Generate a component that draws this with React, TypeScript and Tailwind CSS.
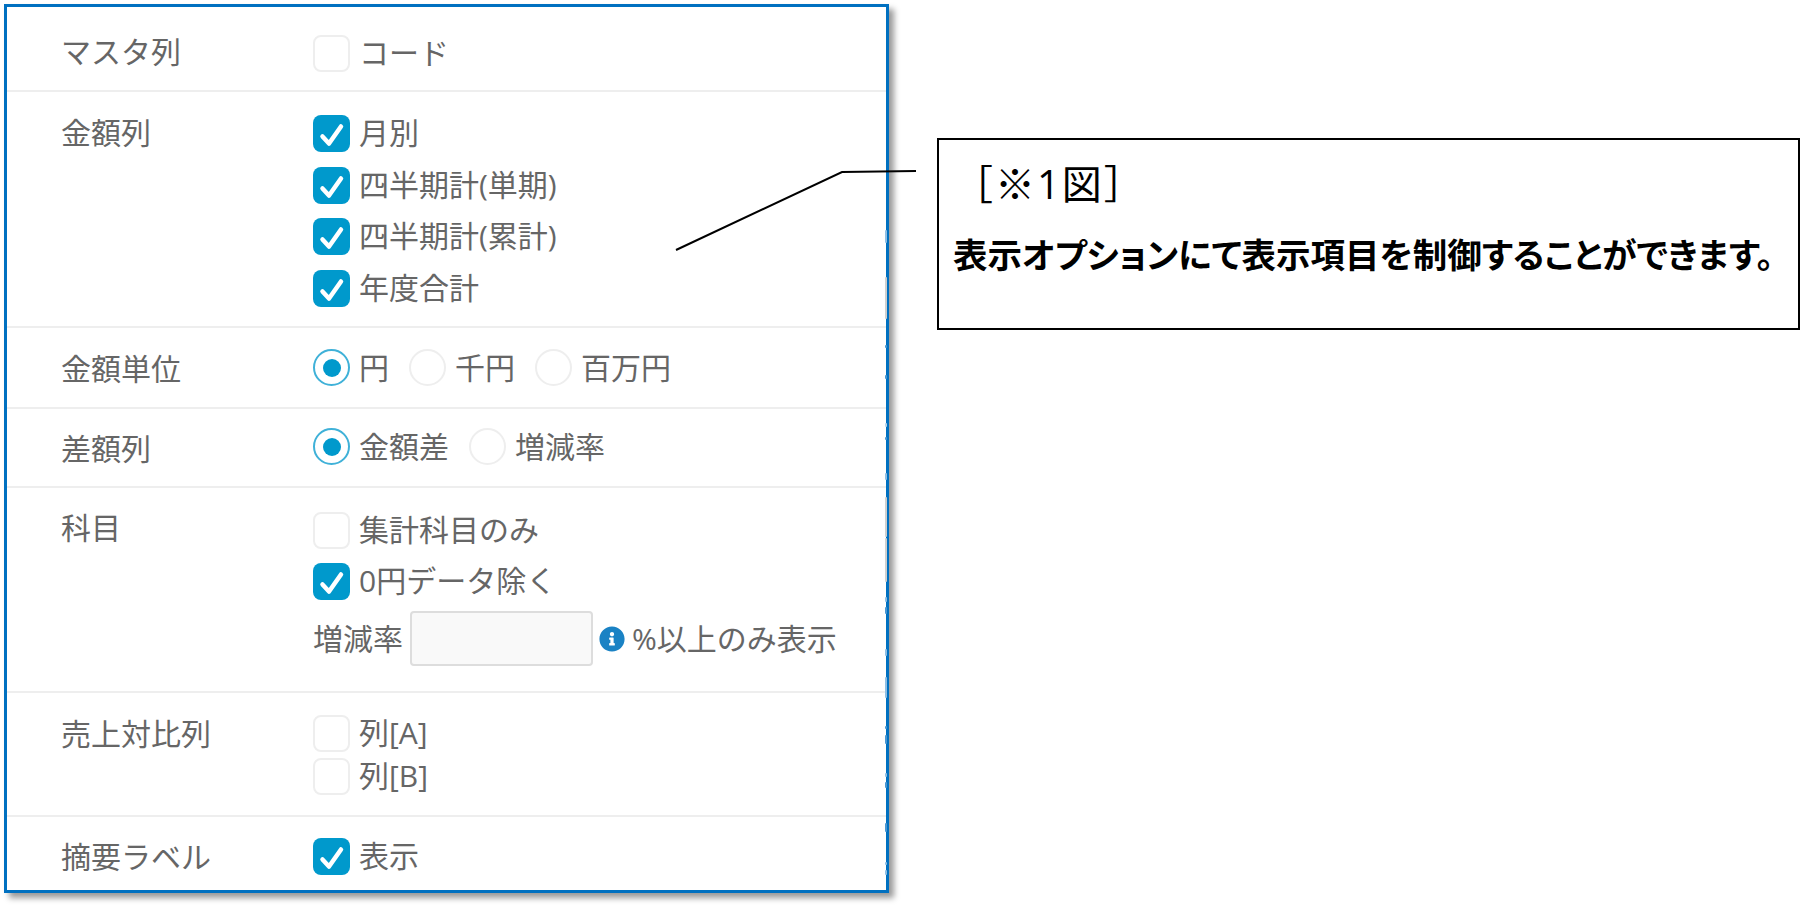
import type { ReactNode } from "react"
import { FaInfoCircle } from "react-icons/fa"

const fontStack = "font-['Open_Sans','Noto_Sans_CJK_JP',sans-serif]"

// bits of the page behind that show along the panel's right edge
const edgeMarks = [
  { top: 230, height: 13, color: "#8fbfe4" },
  { top: 277, height: 42, color: "#cfcfcf" },
  { top: 345, height: 3, color: "#4a97d2" },
  { top: 375, height: 4, color: "#4a97d2" },
  { top: 423, height: 4, color: "#b5d4ec" },
  { top: 437, height: 3, color: "#4a97d2" },
  { top: 473, height: 7, color: "#8fbfe4" },
  { top: 497, height: 40, color: "#cfcfcf" },
  { top: 538, height: 44, color: "#cfcfcf" },
  { top: 597, height: 5, color: "#8fbfe4" },
  { top: 607, height: 7, color: "#4a97d2" },
  { top: 649, height: 7, color: "#8fbfe4" },
  { top: 677, height: 21, color: "#8fbfe4" },
  { top: 726, height: 3, color: "#4a97d2" },
  { top: 735, height: 9, color: "#4a97d2" },
  { top: 773, height: 4, color: "#8fbfe4" },
  { top: 782, height: 6, color: "#4a97d2" },
  { top: 823, height: 9, color: "#4a97d2" },
  { top: 862, height: 3, color: "#8fbfe4" },
  { top: 870, height: 5, color: "#8fbfe4" },
]

function Checkbox({ checked, label }: { checked?: boolean; label: string }) {
  return (
    <div className="flex items-center h-[37px]">
      {checked ? (
        <span className="w-[37px] h-[37px] rounded-[8px] bg-[#0099cc]">
          <svg width="37" height="37" viewBox="0 0 37 37" fill="none" stroke="#fff" strokeWidth="4.5" strokeLinecap="round" strokeLinejoin="round">
            <path d="M9.5 21.5 16 28.5 28 11.5" />
          </svg>
        </span>
      ) : (
        <span className="w-[37px] h-[37px] rounded-[8px] border-2 border-[#eeeeee] bg-white" />
      )}
      <span className="ml-[9px] mb-[2px]">{label}</span>
    </div>
  )
}

function Radio({ checked, label }: { checked?: boolean; label: string }) {
  return (
    <div className="flex items-center h-[37px]">
      {checked ? (
        <span className="w-[37px] h-[37px] rounded-full border-2 border-[#3fb1d8] flex items-center justify-center">
          <span className="w-[18px] h-[18px] rounded-full bg-[#0099cc]" />
        </span>
      ) : (
        <span className="w-[37px] h-[37px] rounded-full border-2 border-[#eeeeee]" />
      )}
      <span className="ml-[9px]">{label}</span>
    </div>
  )
}

function Row({ label, labelClass, className, children }: { label: string; labelClass?: string; className: string; children: ReactNode }) {
  return (
    <div className={`flex pl-[54px] ${className}`}>
      <div className={`w-[252px] shrink-0 leading-[37px] ${labelClass ?? ""}`}>{label}</div>
      <div className="flex-1">{children}</div>
    </div>
  )
}

export default function App() {
  return (
    <div className={`relative h-[907px] w-[1800px] overflow-hidden bg-white flex items-start pl-[4px] pt-[4px] ${fontStack}`}>
      {/* Options panel */}
      <div className="w-[885px] h-[889px] shrink-0 border-[3px] border-[#0070c0] bg-white text-[30px] text-[#666666] leading-[37px] shadow-[5px_5px_6px_rgba(0,0,0,0.4)] [&>div]:border-[#eeeeee]">
        <Row label="マスタ列" labelClass="-mt-[2px]" className="pt-[28px] h-[85px] border-b-2">
          <Checkbox label="コード" />
        </Row>
        <Row label="金額列" labelClass="-mt-[1px]" className="pt-[23px] h-[236px] border-b-2">
          <div className="flex flex-col gap-[14.7px]">
            <Checkbox checked label="月別" />
            <Checkbox checked label="四半期計(単期)" />
            <Checkbox checked label="四半期計(累計)" />
            <Checkbox checked label="年度合計" />
          </div>
        </Row>
        <Row label="金額単位" labelClass="mt-[1px]" className="pt-[21px] h-[81px] border-b-2">
          <div className="flex gap-[20px]">
            <Radio checked label="円" />
            <Radio label="千円" />
            <Radio label="百万円" />
          </div>
        </Row>
        <Row label="差額列" labelClass="mt-[2px]" className="pt-[19px] h-[79px] border-b-2">
          <div className="flex gap-[20px]">
            <Radio checked label="金額差" />
            <Radio label="増減率" />
          </div>
        </Row>
        <Row label="科目" labelClass="-mt-[3px]" className="pt-[24px] h-[205px] border-b-2">
          <div className="flex flex-col">
            <Checkbox label="集計科目のみ" />
            <div className="mt-[14px]">
              <Checkbox checked label="0円データ除く" />
            </div>
            <div className="flex items-center mt-[11px]">
              <span>増減率</span>
              <input className="ml-[7px] w-[183px] h-[55px] rounded-[4px] border-2 border-[#dddddd] bg-[#f9f9f9]" />
              <FaInfoCircle className="ml-[6px] text-[#1a82c4]" size={26} />
              <span className="ml-[7px]">%以上のみ表示</span>
            </div>
          </div>
        </Row>
        <Row label="売上対比列" className="pt-[22px] h-[124px] border-b-2">
          <div className="flex flex-col gap-[6px]">
            <Checkbox label="列[A]" />
            <Checkbox label="列[B]" />
          </div>
        </Row>
        <Row label="摘要ラベル" className="pt-[21px]">
          <Checkbox checked label="表示" />
        </Row>
      </div>

      {edgeMarks.map((m) => (
        <span
          key={m.top}
          className="absolute left-[884.5px] w-[2px] rounded-full"
          style={{ top: m.top, height: m.height, backgroundColor: m.color }}
        />
      ))}

      {/* Callout */}
      <div className="ml-[48px] mt-[134px] w-[863px] h-[192px] shrink-0 border-2 border-black bg-white text-black pl-[14px]">
        <div className="mt-[19px] text-[40px] leading-[50px] tracking-[2px]">［※1図］</div>
        <div className="mt-[24px] text-[34.5px] leading-[44px] font-bold whitespace-nowrap [font-feature-settings:'palt']">
          表示オプションにて表示項目を制御することができます。
        </div>
      </div>

      {/* Leader line */}
      <svg className="absolute left-0 top-0" width="1800" height="907" fill="none" stroke="#000" strokeWidth="2">
        <path d="M676 250 842 172 916 171" />
      </svg>
    </div>
  )
}
